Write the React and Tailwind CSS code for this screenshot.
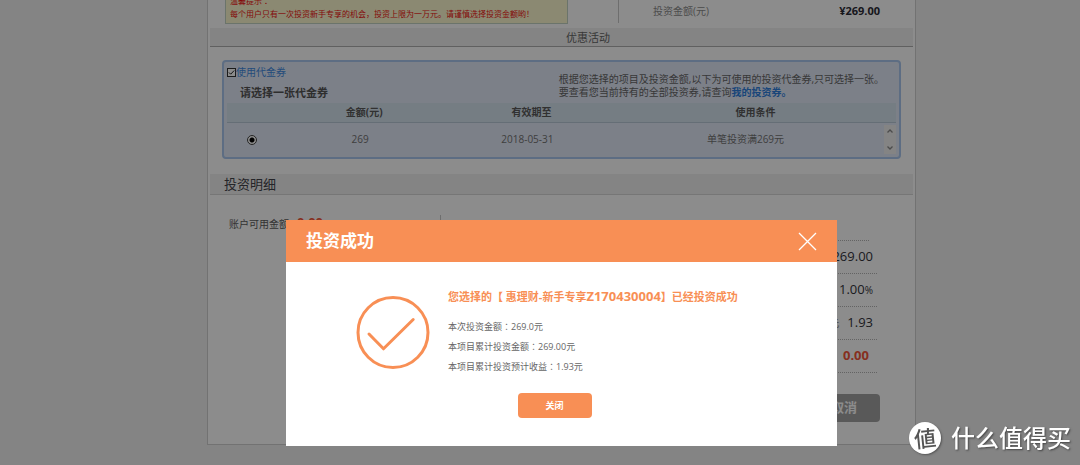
import React from 'react';

const rowClass = 'h-[33px] border-b border-dotted border-[#b4b4b4] flex items-center justify-end gap-2 pr-1';

const Colon = () => <span className="font-['Noto_Sans_CJK_TC',sans-serif]">：</span>;

const TopSummary = () => (
    <div className="h-7 pl-[15px] pr-[33px] flex items-end overflow-hidden">
        <div className="w-[343px] shrink-0 mb-1 px-1 pb-[3px] bg-[#fdf9cf] border border-[#c4d3c4] text-[8px] leading-[13px] text-[#f00f0f] whitespace-nowrap">
            <p>温馨提示<Colon /></p>
            <p>每个用户只有一次投资新手专享的机会，投资上限为一万元。请谨慎选择投资金额哟！</p>
        </div>
        <dl className="grow self-start h-[23px] ml-[50px] pl-[34px] border-l border-[#c8c8c8] flex items-center justify-between">
            <dt className="text-[10px] text-[#8c8c8c]">投资金额(元)</dt>
            <dd className="text-[11px] font-bold text-[#2b2b36]">¥269.00</dd>
        </dl>
    </div>
);

const VoucherTable = () => (
    <table className="w-full table-fixed text-center text-[10px]">
        <colgroup>
            <col className="w-[8%]" />
            <col className="w-[25%]" />
            <col className="w-[25%]" />
            <col />
            <col className="w-3" />
        </colgroup>
        <thead>
            <tr className="h-[19px] leading-[17px] bg-[#d5e3ef] border-b border-[#b9c9d8] text-[#5a5a5a]">
                <th></th>
                <th className="pt-px">金额(元)</th>
                <th className="pt-px">有效期至</th>
                <th className="pt-px" colSpan="2">使用条件</th>
            </tr>
        </thead>
        <tbody>
            <tr className="h-[35px] text-[#737373]">
                <td className="pr-1">
                    <input
                        type="radio"
                        name="voucher"
                        aria-label="269"
                        defaultChecked
                        className="block mx-auto appearance-none size-[10px] rounded-full border border-[#444] bg-white bg-[radial-gradient(circle,#000_0_2px,transparent_3px)]"
                    />
                </td>
                <td className="pr-2">269</td>
                <td className="pr-2">2018-05-31</td>
                <td className="pr-2">单笔投资满269元</td>
                <td>
                    <div className="h-[29px] bg-[#f0f0f0] flex flex-col items-center justify-between py-1 text-[#8a8a8a]">
                        <svg width="6" height="4" viewBox="0 0 6 4" fill="none" stroke="currentColor" strokeWidth="1.3"><path d="M.5 3.5 3 1l2.5 2.5" /></svg>
                        <svg width="6" height="4" viewBox="0 0 6 4" fill="none" stroke="currentColor" strokeWidth="1.3"><path d="M.5.5 3 3l2.5-2.5" /></svg>
                    </div>
                </td>
            </tr>
        </tbody>
    </table>
);

const Voucher = () => (
    <section className="mt-[13px] mx-3 px-[3px] border-2 border-[#a9c6ee] rounded bg-[#e2e9f8]">
        <div className="h-[41px] flex justify-between pr-3">
            <div className="pt-[3px]">
                <label className="flex items-center text-[10px] leading-[14px] text-[#3f8ae0]">
                    <span className="grid place-items-center">
                        <input type="checkbox" defaultChecked className="col-start-1 row-start-1 appearance-none size-[9px] border border-[#333] bg-white" />
                        <svg className="col-start-1 row-start-1 pointer-events-none" width="9" height="9" viewBox="0 0 9 9" fill="none" stroke="#222">
                            <path d="m2 4.500 1.700 1.700 3.500-3.700" />
                        </svg>
                    </span>
                    使用代金券
                </label>
                <h3 className="pl-[13px] mt-[6px] text-[11px] leading-4 font-bold text-[#555]">请选择一张代金券</h3>
            </div>
            <p className="pt-[11px] text-[10px] leading-[13px] text-[#666] whitespace-nowrap">
                根据您选择的项目及投资金额,以下为可使用的投资代金券,只可选择一张。<br />
                要查看您当前持有的全部投资券,请查询<a href="#" className="font-bold text-[#2f7fdd]">我的投资券。</a>
            </p>
        </div>
        <VoucherTable />
    </section>
);

const Details = () => (
    <section className="flex h-[249px] pt-5 pl-[19px]">
        <p className="w-[212px] h-[180px] flex items-start border-r border-[#c8c8c8] text-[10px] leading-[18px] text-[#5c5c5c]">
            账户可用金额
            <span className="ml-2 text-[13px] leading-[14px] font-bold text-[#f4573a]">0.00</span>
        </p>
        <div className="grow pl-[140px] pr-[33px] pt-[25px] text-[13px] text-[#33333b]">
            <div className="mr-[11px] border-t border-dotted border-[#b4b4b4]"></div>
            <div className="mr-[3px]">
                <p className={rowClass}>¥269.00</p>
                <p className={rowClass}><span>1.00<span className="text-[10px]">%</span></span></p>
                <p className={rowClass}><span className="text-[10px] text-[#888]">元</span>1.93</p>
                <p className={rowClass}><span className="pr-1 font-bold text-[#f4573a]">0.00</span></p>
            </div>
            <div className="flex justify-end mt-[21px]">
                <button className="w-[72px] h-7 rounded-sm bg-[#a3a3a3] text-white font-bold">取消</button>
            </div>
        </div>
    </section>
);

const SuccessDialog = () => (
    <div className="fixed inset-0 flex justify-center items-start pt-[220px] pl-[43px] bg-black/45">
        <div role="dialog" aria-labelledby="dialog-title" className="w-[551px] bg-white">
            <header className="h-[42px] px-5 flex items-center justify-between bg-[#f88f55] text-white">
                <h2 id="dialog-title" className="text-[17px] font-bold">投资成功</h2>
                <button aria-label="关闭">
                    <svg width="19" height="19" viewBox="0 0 19 19" fill="none" stroke="currentColor" strokeWidth="1.3">
                        <path d="m1 1 17 17M18 1 1 18" />
                    </svg>
                </button>
            </header>
            <div className="pt-[26px] pb-7">
                <div className="flex pl-[70px] gap-[18px]">
                    <svg className="mt-[7px] shrink-0" width="74" height="74" viewBox="0 0 74 74" fill="none" stroke="#f88f55" strokeWidth="3" strokeLinecap="round" strokeLinejoin="round">
                        <circle cx="37" cy="37.5" r="35" />
                        <path d="m13 39 14.500 14.800 29.700-29.300" />
                    </svg>
                    <div className="text-[9px] leading-5 text-[#666]">
                        <h3 className="mb-[11px] text-[11px] leading-[18px] font-bold text-[#f88f55] whitespace-nowrap">
                            您选择的【 惠理财-新手专享<span className="text-[13px] leading-none">Z170430004</span>】已经投资成功
                        </h3>
                        <p>本次投资金额<Colon />269.0元</p>
                        <p>本项目累计投资金额<Colon />269.00元</p>
                        <p>本项目累计投资预计收益<Colon />1.93元</p>
                    </div>
                </div>
                <div className="flex justify-center pr-[14px] mt-4">
                    <button className="w-[74px] h-[25px] rounded-sm bg-[#f88f55] text-[9px] font-bold text-white">关闭</button>
                </div>
            </div>
        </div>
    </div>
);

const Watermark = () => (
    <div className="fixed right-[9px] bottom-[11px] flex items-center gap-[10px] text-white">
        <span className="size-8 rounded-full bg-white flex items-center justify-center shadow-[1px_1px_2px_#555]">
            <span className="-rotate-6 text-[22px] leading-none font-medium text-[#555]">値</span>
        </span>
        <span className="text-[24px] leading-8 font-medium text-shadow-[1px_1px_2px_#444]">什么值得买</span>
    </div>
);

const App = () => (
    <div className="min-h-screen bg-[#f0f0f0] pl-[43px] font-['Open_Sans','Noto_Sans_CJK_SC',sans-serif]">
        <main className="max-w-[709px] mx-auto px-[2px] bg-white border border-t-0 border-[#cfcfcf]">
            <TopSummary />
            <h2 className="h-[19px] bg-[#f0f0f0] border-b border-[#b0b0b0] text-center text-[11px] leading-[19px] pl-[53px] text-[#666]">优惠活动</h2>
            <Voucher />
            <h2 className="mt-[15px] h-[21px] pl-[14px] bg-[#f0f0f0] border-b border-[#d8d8d8] text-[13px] leading-5 text-[#44444c]">投资明细</h2>
            <Details />
        </main>
        <SuccessDialog />
        <Watermark />
    </div>
);

export default App;
